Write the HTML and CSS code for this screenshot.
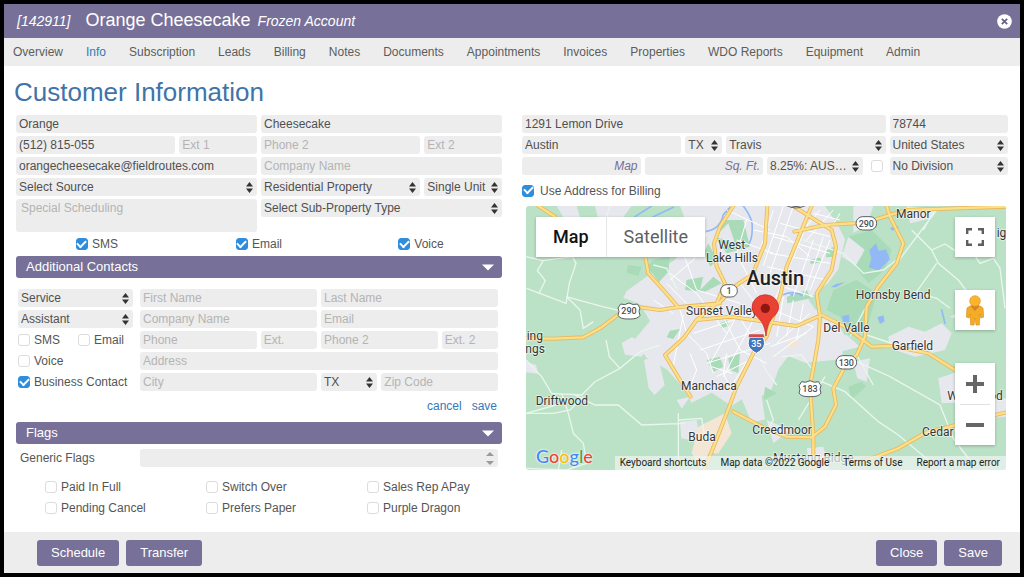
FILE: index.html
```html
<!DOCTYPE html>
<html lang="en">
<head>
<meta charset="utf-8">
<title>Customer Information</title>
<link rel="stylesheet" href="styles.css">
</head>
<body>
<div class="dialog">
  <header class="titlebar">
    <em class="account-id">[142911]</em>
    <span class="account-name">Orange Cheesecake</span>
    <em class="account-state">Frozen Account</em>
    <button class="dismiss" type="button" aria-label="Close window">
      <svg viewBox="0 0 15 15" width="15" height="15"><circle cx="7.500" cy="7.500" r="7.300" fill="#fff"/><path d="M4.800 4.800l5.400 5.400M10.200 4.800l-5.400 5.400" stroke="#66618a" stroke-width="1.700"/></svg>
    </button>
  </header>
  <nav class="tabs">
    <a href="#">Overview</a><a href="#" class="active">Info</a><a href="#">Subscription</a><a href="#">Leads</a><a href="#">Billing</a><a href="#">Notes</a><a href="#">Documents</a><a href="#">Appointments</a><a href="#">Invoices</a><a href="#">Properties</a><a href="#">WDO Reports</a><a href="#">Equipment</a><a href="#">Admin</a>
  </nav>

  <main class="content">
    <h1>Customer Information</h1>
    <div class="columns">
      <section class="column">
        <div class="fields">
          <input class="span6" aria-label="First name" value="Orange">
          <input class="span6" aria-label="Last name" value="Cheesecake">
          <input class="span4" aria-label="Phone" value="(512) 815-055">
          <input class="span2" aria-label="Extension 1" placeholder="Ext 1">
          <input class="span4" aria-label="Phone 2" placeholder="Phone 2">
          <input class="span2" aria-label="Extension 2" placeholder="Ext 2">
          <input class="span6" aria-label="Email address" value="orangecheesecake@fieldroutes.com">
          <input class="span6" aria-label="Company" placeholder="Company Name">
          <select class="span6" aria-label="Source"><option>Select Source</option></select>
          <select class="span4" aria-label="Property"><option>Residential Property</option></select>
          <select class="span2" aria-label="Unit"><option>Single Unit</option></select>
          <textarea class="span6" aria-label="Special scheduling" placeholder="Special Scheduling"></textarea>
          <select class="span6" aria-label="Sub-property type"><option>Select Sub-Property Type</option></select>
        </div>
        <div class="notify">
          <label class="check"><input type="checkbox" checked>SMS</label>
          <label class="check"><input type="checkbox" checked>Email</label>
          <label class="check"><input type="checkbox" checked>Voice</label>
        </div>

        <button class="bar" type="button">Additional Contacts<svg viewBox="0 0 12 7" width="12" height="7"><path d="M0 0.500h12l-6 6z" fill="#fff"/></svg></button>
        <div class="contact">
          <div class="contact-kind">
            <select aria-label="Contact type"><option>Service</option></select>
            <select aria-label="Contact role"><option>Assistant</option></select>
            <div class="pair">
              <label class="check"><input type="checkbox">SMS</label>
              <label class="check"><input type="checkbox">Email</label>
            </div>
            <label class="check"><input type="checkbox">Voice</label>
            <label class="check"><input type="checkbox" checked>Business Contact</label>
          </div>
          <div class="contact-fields">
            <input class="span3" aria-label="Contact first name" placeholder="First Name">
            <input class="span3" aria-label="Contact last name" placeholder="Last Name">
            <input class="span3" aria-label="Contact company" placeholder="Company Name">
            <input class="span3" aria-label="Contact email" placeholder="Email">
            <input class="span2" aria-label="Contact phone" placeholder="Phone">
            <input aria-label="Contact extension" placeholder="Ext.">
            <input class="span2" aria-label="Contact phone 2" placeholder="Phone 2">
            <input aria-label="Contact extension 2" placeholder="Ext. 2">
            <input class="span6" aria-label="Contact address" placeholder="Address">
            <input class="span3" aria-label="Contact city" placeholder="City">
            <select aria-label="Contact state"><option>TX</option></select>
            <input class="span2" aria-label="Contact zip code" placeholder="Zip Code">
          </div>
        </div>
        <div class="contact-actions"><a href="#">cancel</a><a href="#">save</a></div>

        <button class="bar" type="button">Flags<svg viewBox="0 0 12 7" width="12" height="7"><path d="M0 0.500h12l-6 6z" fill="#fff"/></svg></button>
        <div class="generic">
          <label for="generic-flags">Generic Flags</label>
          <select id="generic-flags" class="muted-arrows"><option></option></select>
        </div>
        <div class="flags">
          <label class="check"><input type="checkbox">Paid In Full</label>
          <label class="check"><input type="checkbox">Switch Over</label>
          <label class="check"><input type="checkbox">Sales Rep APay</label>
          <label class="check"><input type="checkbox">Pending Cancel</label>
          <label class="check"><input type="checkbox">Prefers Paper</label>
          <label class="check"><input type="checkbox">Purple Dragon</label>
        </div>
      </section>

      <section class="column">
        <div class="fields">
          <input class="span9" aria-label="Street address" value="1291 Lemon Drive">
          <input class="span3" aria-label="Zip code" value="78744">
          <input class="span4" aria-label="City" value="Austin">
          <select aria-label="State"><option>TX</option></select>
          <select class="span4" aria-label="County"><option>Travis</option></select>
          <select class="span3" aria-label="Country"><option>United States</option></select>
          <input class="span3 hint" aria-label="Map code" placeholder="Map">
          <input class="span3 hint" aria-label="Square feet" placeholder="Sq. Ft.">
          <div class="span3 tax">
            <select aria-label="Tax rate"><option>8.25%: AUS…</option></select>
            <input type="checkbox" aria-label="Tax exempt">
          </div>
          <select class="span3" aria-label="Division"><option>No Division</option></select>
        </div>
        <label class="check billing"><input type="checkbox" checked>Use Address for Billing</label>

        <div class="map">
          <svg class="map-canvas" viewBox="18 18 1440 792" preserveAspectRatio="xMidYMid slice" role="img" aria-label="Map of Austin">
            <rect x="18" y="18" width="1440" height="792" fill="#bbe2c6"/>
            <!-- built-up areas -->
            <g fill="#e7e8ed">
              <path d="M110 18h60l10 34h-50zM225 18h110l-30 40h-70zM480 18h435l40 60 20 40-20 90-30 40-60 50 20 30 60 30 30 50-10 70-110 10-50-20-30 40-20 60-30 20 10 70-40 10-30-70-30 20-60-40-60 30-30-50-45-50-60-35-40-50 50-60-30-50-50-20 10-20 70-50 70-40 60-60z"/>
              <path d="M305 430l30-18 50 20-20 38-50-6zM372 480l40-15 22 90-30 30-18-20zM470 600l40-10-25 36zM480 665l50-5 10 65-56-10zM18 485l30 10 6 26-36-4zM900 405h80l40 35-80 20zM1000 485l50-10-10 70-28-10zM1160 18l80 10-10 28-60 14zM1105 410l60-30 50 15 50-25 30 30-20 50-90 20-75-25zM1255 535l60-20 40 90-90 5zM1375 600l83-5v55l-60 5zM735 430l60 30-25 60-30-30zM740 660l70 30-50 40zM860 745l50-5 20 70h-60zM1290 350l60-30 60 20-50 30zM1000 18h60l-20 60-40 20zM985 110l50 30-20 60-50-30z"/>
            </g>
            <g fill="#f4e6d5"><path d="M535 680l40-20 40-20 20 60-40 60-30 0-20 50-30-50z"/><path d="M930 305l20-5 6 14-18 12zM800 420l40 5-25 25z"/></g>
            <!-- parkland -->
            <g fill="#a9dbb8">
              <path d="M400 180l50-15-5 50-28 32-35-47zM500 240l50-10-10 40 40-40 25 20-50 25-60-5zM325 195l40 5-10 28-36-10zM610 60l60 0 20 80-70 20-35-50zM565 130l26 50-20 20-20-40zM585 110l60 20-20-60z"/>
              <path d="M450 392l30-5-20 30-20-5zM560 480l40-10 10 30-30 16zM625 475l35-15-5 60-25-10zM800 290l60-20 12 25-70 15zM870 180l30-8 6 14-34 6zM920 150l20-10 8 30-30 2zM940 270l70-30 60 40-30 110-50 20-30-60-40-20zM985 110l70-20 60 60-20 60-50 40-40-50 30-50zM600 370l22-10 4 18-22 6zM735 560l36 20-40 20zM985 560l40-15 14 14-45 40z"/>
            </g>
            <!-- water -->
            <g fill="#92b9f5"><path d="M1048 150l20-20 8 22 22-4 12 30-34 34-30-10 8-26zM967 348l20-4 2 22-20 2zM1072 352l18-6 4 18-14 8zM932 262l16-10 28-6-28 16zM808 284l20-6-6 12zM1110 84l22-6 4 6-20 8z"/></g>
            <g fill="none" stroke="#92b9f5" stroke-width="5" stroke-linecap="round"><path d="M560 94q40-6 50-50l20-22M670 18q20 26 26 50 4 50-14 70M345 50l50-32M400 50l60-28M790 284q30-14 60 4M1265 330l10 40"/></g>
            <!-- local roads -->
            <g fill="none" stroke="#e9f6ee" stroke-width="4">
              <path d="M18 170l50 12 90-12 10 20-20 60-10 60-118-45M140 290l40 40 10 55 30-20M138 290l110 30 60 14M70 182l-18 30 24 30-20 40M258 420l10 50 32 35 60-50 60-20M300 505l-75 40-40 40-90-5-30-50-47-50M165 585l60 30h70l70 60 130-5M190 590l-40 40-50 10-82 0M125 580l20 60 15 60 30 30 10 60-60 20-122-5M125 750l-10 60M475 640v170M475 660l70-5 10 60M18 640l90-25M270 18l-20 60M400 195l40 10 30 60"/>
              <path d="M1000 480l110 50 150 85 40 100 60 80M905 545l70 30 100 90 60 40 90 75M835 660l80-130M785 470l60-5 30 40M740 600l20 60-25 40M1175 90l60 60 20 40 60 50 30 40M1210 90l40-70M1235 150l40-18 30 20M1250 190l-60 85M1180 275l70 20 40 30M1360 160l20 30 40-15 20 30 15 120M1130 190l120-160M720 475l20 40 30 40M850 120l120 40 60 60 60-10 40-30M1060 280l-70 130M1010 465l50 90M1040 405l90 30"/>
            </g>
            <g fill="none" stroke="#fff" stroke-width="3">
              <path d="M450 220l80 60 90 120M490 160l40 110 130 40M560 100l-40 80-70 60M480 330l20 70 60 60 20 60M400 300l60 40M600 330l60 120 80 40M640 320l60 100M520 400l180-60M540 450l180-60M560 490l190-60M590 530l100-50M650 350l-80 140M700 360l-90 170M740 390l-100 160M660 250l70 90M680 60l-30 100 60 120M620 30l130 60M650 120l110 40M700 90l100 20 70 60M760 30l-40 120M790 18l-60 180M820 18l-70 200M850 100l-90 210M740 200l180 40M750 160l180 30M730 240l150 50M760 110l170 50M780 70l150 40M880 120l-60 170M910 110l-60 180M930 120l-60 150M760 330l120 50M790 290l-20 120M820 300l-20 110M850 310l-20 110M750 440l110-40M760 470l120-90M870 340l-100 90M900 30l-50 60M940 30l-80 90M960 40l-30 50M960 60l-80-20M490 345l-30 150M510 460l20 50-20 50M500 310l-60-60M620 460l-10 60 30 60M575 500l60 20"/>
            </g>
            <!-- highways: casing, then fill -->
            <g fill="none" stroke-linejoin="round" stroke-linecap="round">
              <g stroke="#ecb65a" stroke-width="12">
                <path id="hw" d="M18 415l82 1 90-4 50-27 60-45 60-18 60 8 50-8 130-12M375 165l10 55 45 50 45 52M55 18l50 32M640 18l-40 62-18 50 8 70 25 50-25 60-60 50-40 55-55 50 45 75 32 50M600 306l50-51 48-32 37-93 7-112M875 18l-30 72-45 110-20 90-40 120-40 50-50 100-30 80-55 140-15 30M825 22l110 68 13 50-13 70-45 70 10 70-5 70-25 140 10 150v100M823 95l92-20 120-7 75-23 50-15 298-10M1100 18l10 32 40 80-20 60-55 70-35 60-5 90-25 55-30 25-40 75 8 50-33 65-40 32-75-2-65-25-95-50M530 360l100-10 105 15 95 13 75-33 70 35 60 45 20 15 60-2 110 22 80 50M1020 788l115-43 80-46 210-54 33-8"/>
              </g>
              <use href="#hw" stroke="#fbe08a" stroke-width="7"/>
            </g>
            <!-- place names -->
            <g class="places">
              <text x="635" y="146" text-anchor="middle">West</text>
              <text x="636" y="185" text-anchor="middle">Lake Hills</text>
              <text class="city" x="766" y="254" text-anchor="middle">Austin</text>
              <text x="498" y="345">Sunset Valley</text>
              <text x="1128" y="55">Manor</text>
              <text x="1430" y="112">ig</text>
              <text x="1007" y="298">Hornsby Bend</text>
              <text x="910" y="395">Del Valle</text>
              <text x="1115" y="450">Garfield</text>
              <text x="483" y="571">Manchaca</text>
              <text x="47" y="615">Driftwood</text>
              <text x="505" y="722">Buda</text>
              <text x="697" y="701">Creedmoor</text>
              <text x="20" y="420">ing</text>
              <text x="16" y="460">ngs</text>
              <text x="1206" y="708">Cedar Creek</text>
              <text x="1282" y="601">Wyldwood</text>
              <text x="760" y="786">Mustang Ridge</text>
            </g>
            <!-- route shields -->
            <g fill="#fff" stroke="#596066" stroke-width="3">
              <path d="M302 312q12 5 25-3 13 8 25 3l8 12q-6 10 0 22-6 12-33 11-27 1-33-11 6-12 0-22z"/>
              <path d="M845 545q12 5 25-3 13 8 25 3l8 12q-6 10 0 22-6 12-33 11-27 1-33-11 6-12 0-22z"/>
              <rect x="602" y="254" width="50" height="37" rx="18"/>
              <rect x="1008" y="50" width="62" height="40" rx="20"/>
              <rect x="948" y="467" width="62" height="40" rx="20"/>
              <path d="M798 10q30 20 60 0v6q-30 16-60 0z"/>
            </g>
            <path d="M688 412h42q8 22-2 33-8 10-19 15-11-5-19-15-10-11-2-33z" fill="#4275bb" stroke="#fff" stroke-width="3"/>
            <path d="M687 403h44l1 9h-46z" fill="#d54b46"/>
            <g class="numbers">
              <text x="327" y="343">290</text><text x="627" y="282">1</text><text x="1039" y="80">290</text><text x="979" y="497">130</text><text x="870" y="576">183</text><text x="709" y="441" class="inverse">35</text>
            </g>
            <path d="M738 408c-4-34-14-45-28-59-9-10-14-18-14-27a40 38 0 0 1 80 0c0 9-5 17-14 27-14 14-20 25-24 59z" fill="#e94235" stroke="#c5221f" stroke-width="2"/>
            <circle cx="736" cy="325" r="14" fill="#8c1713"/>
          </svg>
          <div class="map-types"><button type="button" class="chosen">Map</button><button type="button">Satellite</button></div>
          <div class="map-tools">
            <button type="button" aria-label="Full screen"><svg viewBox="0 0 18 18" width="18" height="18"><path d="M1.200 6V1.200H6M12 1.200h4.800V6M16.800 12v4.800H12M6 16.800H1.200V12" fill="none" stroke="#5f5f5f" stroke-width="2.400"/></svg></button>
            <button type="button" aria-label="Street view"><svg viewBox="0 0 18 31" width="18" height="31"><path d="M4 11q5-3 10 0l3 2 .8 9-3 1-.8-4-.7 11H10l-1-7-1 7H4.700L4 19l-.8 4-3-1L1 13z" fill="#f4ac27" stroke="#d58d1b" stroke-width=".6"/><path d="M4.500 11l4.500 5 4.500-5z" fill="#d9822b"/><circle cx="9" cy="6" r="5.300" fill="#fbb52d" stroke="#df971f" stroke-width=".7"/></svg></button>
            <div class="zoomer">
              <button type="button" aria-label="Zoom in"><svg viewBox="0 0 18 18" width="18" height="18"><path d="M9 0v18M0 9h18" stroke="#666" stroke-width="4"/></svg></button>
              <button type="button" aria-label="Zoom out"><svg viewBox="0 0 18 18" width="18" height="18"><path d="M0 9h18" stroke="#666" stroke-width="4"/></svg></button>
            </div>
          </div>
          <div class="google"><span class="g-blue">G</span><span class="g-red">o</span><span class="g-yellow">o</span><span class="g-blue">g</span><span class="g-green">l</span><span class="g-red">e</span></div>
          <div class="credits"><a href="#">Keyboard shortcuts</a><span>Map data ©2022 Google</span><a href="#">Terms of Use</a><a href="#">Report a map error</a></div>
        </div>
      </section>
    </div>
  </main>

  <footer class="actions">
    <button type="button">Schedule</button>
    <button type="button">Transfer</button>
    <button type="button" class="push">Close</button>
    <button type="button">Save</button>
  </footer>
</div>
</body>
</html>
```
FILE: styles.css
```css
* { box-sizing: border-box; }

body {
  margin: 0;
  padding: 4px;
  background: #000;
  color: #555;
  font: 12px/18px "Liberation Sans", Arial, sans-serif;
}

button, input, select, textarea { font: inherit; color: inherit; }
button { border: 0; padding: 0; cursor: pointer; }
a { color: #337ab7; text-decoration: none; }

.dialog {
  display: flex;
  flex-direction: column;
  min-height: calc(100vh - 8px);
  background: #fff;
}

.titlebar {
  display: flex;
  align-items: baseline;
  height: 34px;
  padding: 0 8px 0 13px;
  background: #777098;
  color: #fff;
  line-height: 32px;
}
.account-id { margin-right: 15px; font-size: 14px; }
.account-name { margin-right: 7px; font-size: 18px; }
.account-state { font-size: 14px; }
.dismiss {
  align-self: center;
  height: 18px;
  margin-left: auto;
  background: none;
  line-height: 0;
}

.tabs {
  display: flex;
  gap: 23px;
  padding: 0 9px;
  background: #ededed;
  line-height: 28px;
}
.tabs a { color: #5c5c5c; }
.tabs a.active { color: #337ab7; }

.content { flex: 1; padding: 11px 12px; }

h1 {
  margin: 0 0 8px -2px;
  color: #3f74a8;
  font-size: 26px;
  font-weight: 400;
  line-height: 30px;
}

.columns {
  display: grid;
  grid-template-columns: 1fr 1fr;
  gap: 20px;
}
.column { min-width: 0; }

.fields {
  display: grid;
  grid-template-columns: repeat(12, minmax(0, 1fr));
  gap: 3px 4px;
}
.span2 { grid-column: span 2; }
.span3 { grid-column: span 3; }
.span4 { grid-column: span 4; }
.span6 { grid-column: span 6; }
.span9 { grid-column: span 9; }

input:not([type="checkbox"]), select, textarea {
  width: 100%;
  min-width: 0;
  height: 18px;
  margin: 0;
  padding: 0 3px;
  border: 0;
  border-radius: 3px;
  background: #ededed;
  color: #505050;
  line-height: 18px;
}
/* The box reaches past its row, beside the last drop-down. */
textarea { display: block; height: 33px; padding: 0 5px; resize: none; }
::placeholder { color: #b4b4b4; opacity: 1; }
.hint { text-align: right; }
.hint::placeholder { color: #777098; font-style: italic; }

select {
  appearance: none;
  background: #ededed url("data:image/svg+xml,%3Csvg xmlns='http://www.w3.org/2000/svg' width='7' height='11'%3E%3Cpath d='M0 4.500L3.500 0 7 4.500zM0 6.500h7L3.500 11z' fill='%23333'/%3E%3C/svg%3E") no-repeat right 4px center;
}
.muted-arrows {
  background-image: url("data:image/svg+xml,%3Csvg xmlns='http://www.w3.org/2000/svg' width='8' height='13'%3E%3Cpath d='M0 4L4 0l4 4zM0 9h8l-4 4z' fill='%23999'/%3E%3C/svg%3E");
}

input[type="checkbox"] {
  flex: none;
  display: grid;
  place-items: center;
  width: 12px;
  height: 12px;
  margin: 0;
  appearance: none;
  border: 1px solid #dcdcdc;
  border-radius: 3px;
  background: #fff;
}
input[type="checkbox"]:checked { border-color: #2e8ddd; background: #2e8ddd; }
input[type="checkbox"]:checked::before {
  content: "";
  width: 7px;
  height: 4px;
  margin-bottom: 3px;
  border: solid #fff;
  border-width: 0 0 2px 2px;
  transform: rotate(-45deg);
}

.check { display: flex; align-items: center; gap: 4px; height: 18px; white-space: nowrap; }

.notify {
  display: grid;
  grid-template-columns: repeat(3, 1fr);
  align-items: center;
  justify-items: center;
  height: 24px;
}

.bar {
  display: flex;
  align-items: center;
  justify-content: space-between;
  width: 100%;
  height: 22px;
  padding: 0 8px 0 10px;
  border-radius: 3px;
  background: #777098;
  color: #fff;
  font-size: 13px;
}

.contact {
  display: grid;
  grid-template-columns: 115px 1fr;
  gap: 7px;
  padding: 11px 4px 0 2px;
}
.contact-kind { display: flex; flex-direction: column; gap: 3px; }
.pair { display: grid; grid-template-columns: 60px 1fr; }
.contact-fields {
  display: grid;
  grid-template-columns: repeat(6, minmax(0, 1fr));
  gap: 3px 4px;
}
.contact-actions {
  display: flex;
  justify-content: flex-end;
  gap: 10px;
  padding-right: 5px;
  line-height: 31px;
}

.generic {
  display: grid;
  grid-template-columns: 120px 1fr;
  padding: 5px 4px 11px;
}
.flags {
  display: grid;
  grid-template-columns: repeat(3, 157px);
  gap: 3px 4px;
  padding-left: 29px;
}

.tax { display: flex; align-items: center; gap: 8px; padding-right: 3px; }
.tax select { flex: 1; width: auto; }
.billing { height: 31px; gap: 6px; }

.map {
  position: relative;
  margin: 0 2px 0 4px;
  overflow: hidden;
  border-radius: 3px;
  font-family: Roboto, sans-serif;
}
.map-canvas { display: block; width: 100%; height: 264px; }
.places text {
  fill: #33373b;
  stroke: #fff;
  stroke-opacity: .6;
  stroke-width: 5px;
  paint-order: stroke;
  font-size: 36px;
}
.places .city { fill: #202124; font-size: 60px; font-weight: 500; }
.numbers text { fill: #4a4f55; font-size: 27px; font-weight: 500; text-anchor: middle; }
.numbers .inverse { fill: #fff; }

.map-types {
  position: absolute;
  top: 11px;
  left: 10px;
  display: flex;
  box-shadow: 0 1px 3px rgba(0, 0, 0, .25);
}
.map-types button {
  height: 40px;
  padding: 0 17px;
  background: #fff;
  color: #5f5f5f;
  font-size: 18px;
}
.map-types .chosen { border-right: 1px solid #e6e6e6; color: #111; font-weight: 500; }

.map-tools {
  position: absolute;
  top: 11px;
  right: 11px;
  display: flex;
  flex-direction: column;
  gap: 33px;
}
.map-tools button {
  display: grid;
  place-items: center;
  width: 40px;
  height: 40px;
  background: #fff;
}
.map-tools > * { box-shadow: 0 1px 3px rgba(0, 0, 0, .25); }
.zoomer { background: #fff; }
.zoomer button { height: 41px; }
.zoomer button + button::before {
  content: "";
  align-self: start;
  width: 30px;
  height: 1px;
  margin-bottom: 10px;
  background: #e0e0e0;
}
.zoomer button + button { align-content: space-between; padding-bottom: 11px; }

.google {
  position: absolute;
  bottom: 2px;
  left: 10px;
  font: 500 18px/24px Lato, sans-serif;
  text-shadow: 0 0 2px #fff, 0 0 2px #fff;
}
.g-blue { color: #4285f4; }
.g-red { color: #ea4335; }
.g-yellow { color: #fbbc05; }
.g-green { color: #34a853; }

.credits {
  position: absolute;
  right: 0;
  bottom: 0;
  display: flex;
  gap: 14px;
  padding: 0 6px 0 5px;
  background: rgba(240, 245, 242, .7);
  color: #222;
  font-size: 10px;
  line-height: 14px;
  white-space: nowrap;
}
.credits a { color: inherit; }

.actions {
  display: flex;
  align-items: center;
  gap: 7px;
  height: 41px;
  padding: 0 18px 0 33px;
  background: #ededed;
}
.actions button {
  height: 26px;
  padding: 0 14px;
  border-radius: 3px;
  background: #777098;
  color: #fff;
  font-size: 13px;
}
.actions .push { margin-left: auto; }
```
